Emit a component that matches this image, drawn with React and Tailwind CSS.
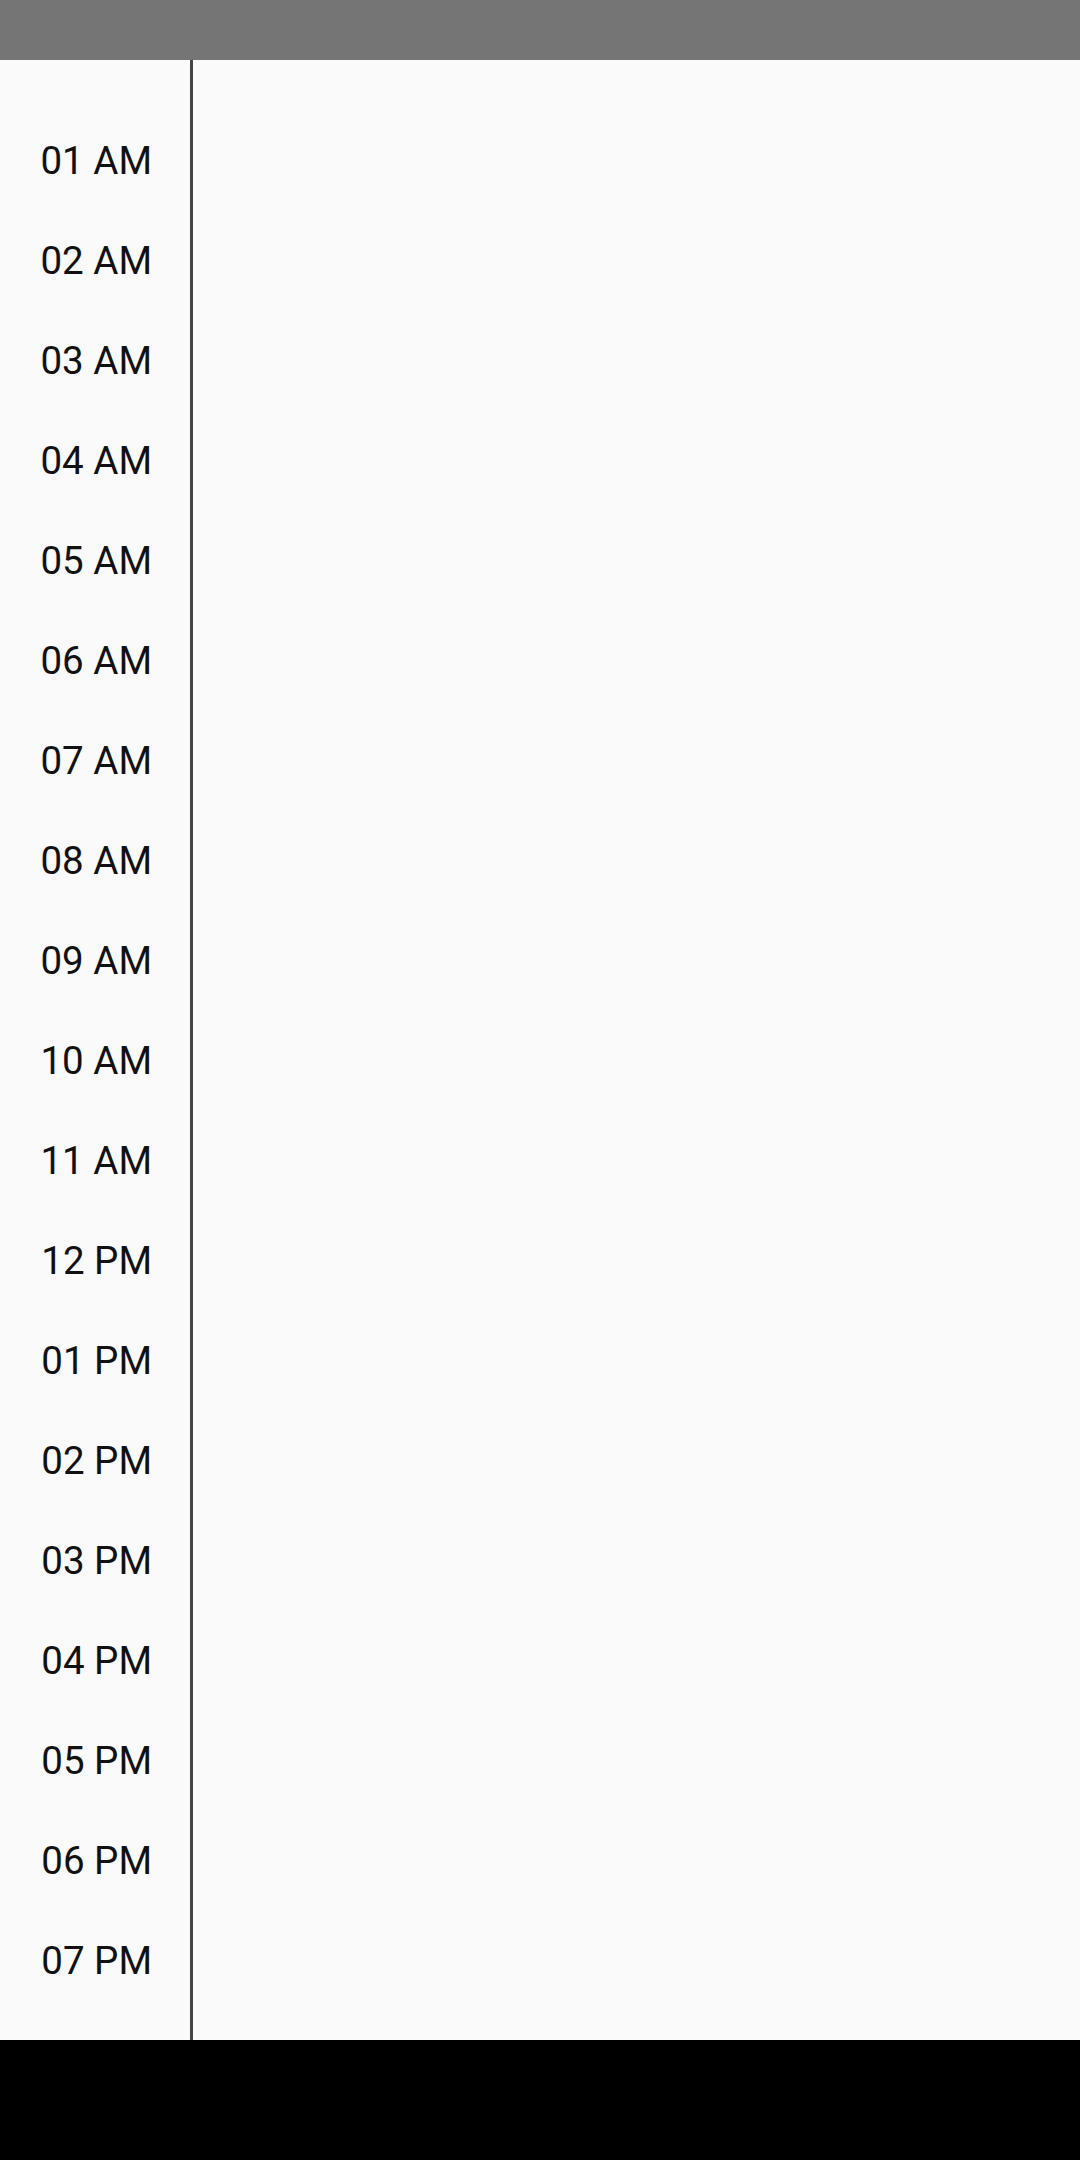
const hours = [
  '01 AM', '02 AM', '03 AM', '04 AM', '05 AM', '06 AM', '07 AM', '08 AM', '09 AM', '10 AM',
  '11 AM', '12 PM', '01 PM', '02 PM', '03 PM', '04 PM', '05 PM', '06 PM', '07 PM',
];

export default function App() {
  return (
    <div className="w-[1080px] h-[2160px] flex flex-col bg-[#fafafa] font-['Roboto',sans-serif] overflow-hidden">
      <div className="h-[60px] shrink-0 bg-[#757575]" />

      <div className="flex-1 flex min-h-0">
        <div className="w-[190px] shrink-0 pt-[51px] pr-[38px]">
          {hours.map((h) => (
            <div key={h} className="h-[100px] flex items-center justify-end text-[38.5px] leading-none text-[#111]">
              {h}
            </div>
          ))}
        </div>
        <div className="w-[3px] shrink-0 bg-[#444]" />
        <div className="flex-1" />
      </div>

      <div className="h-[120px] shrink-0 bg-black" />
    </div>
  );
}
